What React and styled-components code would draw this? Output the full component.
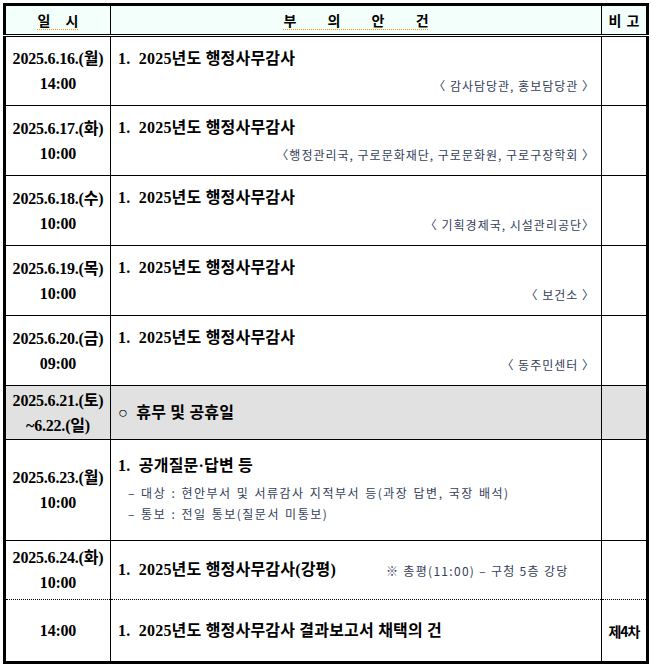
import React from 'react';
import styled, { createGlobalStyle } from 'styled-components';

const GlobalStyle = createGlobalStyle`
  body {
    margin: 0;
    padding: 3px 0 0 3px;
    background: #ffffff;
    font-family: "Liberation Serif", "Noto Sans CJK KR", serif;
    color: #000000;
  }
`;

const Table = styled.table`
  width: 643px;
  border-collapse: collapse;
  table-layout: fixed;
  border: 3px solid #000;
`;

const HeadCell = styled.th`
  height: 28px;
  padding: 0;
  background: #f3fffa;
  border: 1px solid #000;
  border-bottom: 3px double #000;
  font-family: "Noto Sans CJK KR", "Noto Sans", sans-serif;
  font-size: 14px;
  font-weight: 700;
  text-align: center;
  vertical-align: middle;
`;

const HeadLabel = styled.span`
  word-spacing: ${(p) => p.$spread || 0}px;
  text-decoration: ${(p) => (p.$plain ? 'none' : 'underline dotted #ff8a00')};
  text-decoration-thickness: 1px;
  text-underline-offset: 3px;
`;

const Row = styled.tr`
  height: ${(p) => p.$h}px;
  background: ${(p) => (p.$gray ? '#e1e1e1' : '#ffffff')};

  & > td {
    border-top: ${(p) => (p.$dotted ? '1px dotted #000' : '1px solid #000')};
  }
`;

const DateCell = styled.td`
  border-left: 1px solid #000;
  border-right: 1px solid #000;
  padding: 0;
  text-align: center;
  vertical-align: middle;
  font-size: 16px;
  font-weight: 700;
  letter-spacing: -0.2px;
  line-height: 25px;
  white-space: nowrap;
`;

const BodyCell = styled.td`
  border-left: 1px solid #000;
  border-right: 1px solid #000;
  padding: ${(p) => (p.$top ? '12px 6px 0 7px' : '0 6px 0 7px')};
  vertical-align: ${(p) => (p.$top ? 'top' : 'middle')};
`;

const NoteCell = styled.td`
  border-left: 1px solid #000;
  padding: 0;
  text-align: center;
  vertical-align: middle;
  font-family: "Noto Sans CJK KR", sans-serif;
  font-size: 14px;
  font-weight: 700;
  letter-spacing: -1px;
`;

const Title = styled.div`
  font-size: 16px;
  font-weight: 700;
  line-height: 20px;
  letter-spacing: 0.2px;
  white-space: pre;
  margin-bottom: ${(p) => p.$gap || 0}px;
`;

const Sub = styled.div`
  margin-top: 8px;
  text-align: right;
  font-family: "Noto Sans CJK KR", "Noto Sans", sans-serif;
  font-size: 12px;
  letter-spacing: 1px;
  line-height: 18px;
  color: #34405a;
  white-space: nowrap;
`;

const Bullet = styled.div`
  padding-left: 10px;
  font-family: "Noto Sans CJK KR", "Noto Sans", sans-serif;
  font-size: 12px;
  letter-spacing: 1.5px;
  word-spacing: 1px;
  line-height: 21px;
  color: #34405a;
  white-space: nowrap;
`;

const Inline = styled.div`
  display: flex;
  align-items: center;
  gap: 50px;
`;

const Remark = styled.span`
  font-family: "Noto Sans CJK KR", "Noto Sans", sans-serif;
  font-size: 12px;
  letter-spacing: 1.3px;
  color: #34405a;
  white-space: nowrap;
`;

const audits = [
  { day: '2025.6.16.(월)', time: '14:00', who: '〈 감사담당관, 홍보담당관 〉' },
  { day: '2025.6.17.(화)', time: '10:00', who: '〈행정관리국, 구로문화재단, 구로문화원, 구로구장학회 〉' },
  { day: '2025.6.18.(수)', time: '10:00', who: '〈 기획경제국, 시설관리공단〉' },
  { day: '2025.6.19.(목)', time: '10:00', who: '〈 보건소 〉' },
  { day: '2025.6.20.(금)', time: '09:00', who: '〈 동주민센터 〉' },
];

export default function App() {
  return (
    <>
      <GlobalStyle />
      <Table>
        <colgroup>
          <col style={{ width: 106 }} />
          <col style={{ width: 491 }} />
          <col style={{ width: 46 }} />
        </colgroup>
        <thead>
          <tr>
            <HeadCell><HeadLabel $spread={12}>일 시</HeadLabel></HeadCell>
            <HeadCell><HeadLabel $spread={28}>부 의 안 건</HeadLabel></HeadCell>
            <HeadCell><HeadLabel $plain $spread={2}>비 고</HeadLabel></HeadCell>
          </tr>
        </thead>
        <tbody>
          {audits.map((a) => (
            <Row key={a.day} $h={70}>
              <DateCell>{a.day}<br />{a.time}</DateCell>
              <BodyCell $top>
                <Title>1.  2025년도 행정사무감사</Title>
                <Sub>{a.who}</Sub>
              </BodyCell>
              <NoteCell />
            </Row>
          ))}
          <Row $h={54} $gray>
            <DateCell>2025.6.21.(토)<br />~6.22.(일)</DateCell>
            <BodyCell><Title>○  휴무 및 공휴일</Title></BodyCell>
            <NoteCell />
          </Row>
          <Row $h={101}>
            <DateCell>2025.6.23.(월)<br />10:00</DateCell>
            <BodyCell>
              <Title $gap={6}>1.  공개질문·답변 등</Title>
              <Bullet>– 대상 : 현안부서 및 서류감사 지적부서 등(과장 답변, 국장 배석)</Bullet>
              <Bullet>– 통보 : 전일 통보(질문서 미통보)</Bullet>
            </BodyCell>
            <NoteCell />
          </Row>
          <Row $h={59}>
            <DateCell>2025.6.24.(화)<br />10:00</DateCell>
            <BodyCell>
              <Inline>
                <Title>1.  2025년도 행정사무감사(강평)</Title>
                <Remark>※ 총평(11:00) – 구청 5층 강당</Remark>
              </Inline>
            </BodyCell>
            <NoteCell />
          </Row>
          <Row $h={63} $dotted>
            <DateCell>14:00</DateCell>
            <BodyCell><Title>1.  2025년도 행정사무감사 결과보고서 채택의 건</Title></BodyCell>
            <NoteCell>제4차</NoteCell>
          </Row>
        </tbody>
      </Table>
    </>
  );
}
